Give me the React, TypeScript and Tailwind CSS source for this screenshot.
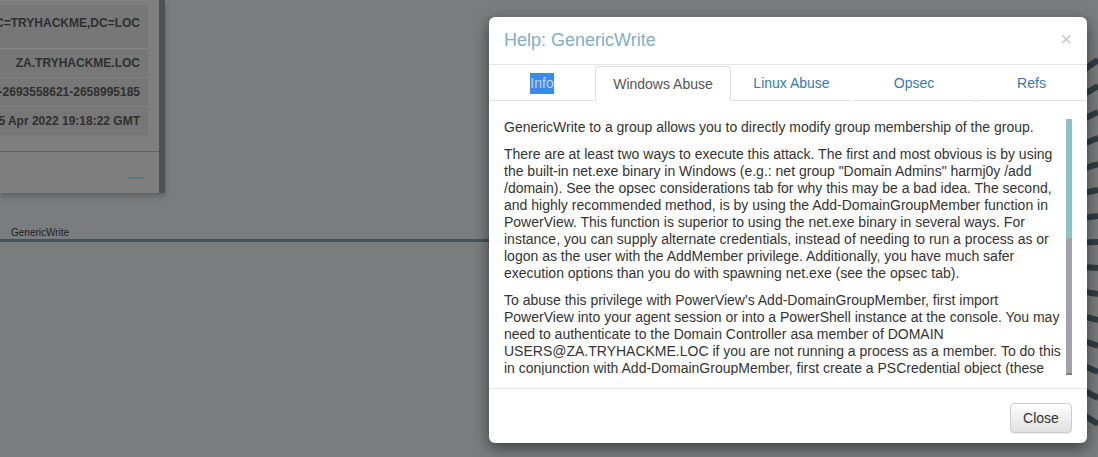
import React from "react";

const fanTargets = [60, 86, 112, 138, 164, 190, 216, 242, 268, 294, 320, 346, 372, 398, 424];

function Fan() {
  const cx = 820;
  const cy = 250;
  return (
    <svg className="absolute left-0 top-0" width={1098} height={457} viewBox="0 0 1098 457">
      {fanTargets.map((y, i) => {
        const tx = 1098;
        return <line key={i} x1={cx} y1={cy} x2={tx} y2={y} stroke="#2f3d43" strokeWidth={6} />;
      })}
    </svg>
  );
}

function LeftPanel() {
  return (
    <div className="absolute left-0 top-0 flex h-[193px] w-[165px] bg-[#7f7f7f] shadow-[0_3px_6px_rgba(0,0,0,0.25)]">
      <div className="flex w-[159px] flex-col pt-[5px]">
        <div className="w-[148px] bg-[#777777]">
          <div className="flex h-[43px] justify-end pr-[8px] pt-[10px] text-[12px] font-bold leading-[16px] text-[#2f2f2f]">
            C=TRYHACKME,DC=LOC
          </div>
          <div className="flex h-[29px] items-center justify-end border-t border-[#858585] pr-[8px] text-[12px] font-bold text-[#2f2f2f]">
            ZA.TRYHACKME.LOC
          </div>
          <div className="flex h-[29px] items-center justify-end whitespace-nowrap border-t border-[#858585] pr-[8px] text-[12px] font-bold text-[#2f2f2f]">
            -2693558621-2658995185
          </div>
          <div className="flex h-[29px] items-center justify-end whitespace-nowrap border-t border-[#858585] pr-[8px] text-[12px] font-bold text-[#2f2f2f]">
            5 Apr 2022 19:18:22 GMT
          </div>
        </div>
        <div className="mt-[16px] h-[1px] w-full bg-[#626262]" />
        <div className="flex flex-1 justify-end pr-[16px] pt-[25px]">
          <div className="h-[2px] w-[15px] bg-[#5a7580]" />
        </div>
      </div>
      <div className="w-[6px] bg-[#505050]" />
    </div>
  );
}

const tabs = [
  { label: "Info", w: "w-[106px]" },
  { label: "Windows Abuse", w: "w-[136px]" },
  { label: "Linux Abuse", w: "w-[121px]" },
  { label: "Opsec", w: "w-[124px]" },
  { label: "Refs", w: "w-[111px]" },
];

function Modal() {
  return (
    <div className="absolute left-[489px] top-[17px] flex h-[426px] w-[598px] flex-col rounded-[6px] bg-white shadow-[0_5px_15px_rgba(0,0,0,0.5)]">
      <div className="flex h-[48px] items-center justify-between border-b border-[#e5e5e5] pl-[15px] pr-[15px]">
        <span className="text-[18px] text-[#80afc5]">Help: GenericWrite</span>
        <span className="-mt-[4px] text-[20px] font-normal leading-none text-[#c8c8c8]">×</span>
      </div>
      <div className="flex h-[36px] items-end">
        {tabs.map((t, i) =>
          i === 1 ? (
            <div
              key={t.label}
              className={`${t.w} flex h-[35px] items-center justify-center rounded-t-[4px] border border-b-0 border-[#dddddd] bg-white text-[14px] text-[#555555]`}
            >
              {t.label}
            </div>
          ) : (
            <div key={t.label} className={`${t.w} flex h-[35px] px-[1px]`}>
              <div className="flex flex-1 items-center justify-center rounded-t-[4px] border-b border-[#dddddd] text-[14px] text-[#337ab7]">
                {i === 0 ? <span className="bg-[#3a8be8] text-[#bcd5f3]">{t.label}</span> : t.label}
              </div>
            </div>
          )
        )}
      </div>
      <div className="flex border-b border-[#e5e5e5] pb-[13px] pl-[15px] pr-[15px] pt-[18px]">
        <div className="h-[256px] w-[562px] overflow-hidden text-[14px] leading-[17px] text-[#333333]">
          <p className="mb-[10px]">GenericWrite to a group allows you to directly modify group membership of the group.</p>
          <p className="mb-[10px]">
            There are at least two ways to execute this attack. The first and most obvious is by using the built-in net.exe
            binary in Windows (e.g.: net group "Domain Admins" harmj0y /add /domain). See the opsec considerations tab for why
            this may be a bad idea. The second, and highly recommended method, is by using the Add-DomainGroupMember function
            in PowerView. This function is superior to using the net.exe binary in several ways. For instance, you can supply
            alternate credentials, instead of needing to run a process as or logon as the user with the AddMember privilege.
            Additionally, you have much safer execution options than you do with spawning net.exe (see the opsec tab).
          </p>
          <p className="mb-[10px]">
            To abuse this privilege with PowerView's Add-DomainGroupMember, first import PowerView into your agent session or
            into a PowerShell instance at the console. You may need to authenticate to the Domain Controller asa member of
            DOMAIN USERS@ZA.TRYHACKME.LOC if you are not running a process as a member. To do this in conjunction with
            Add-DomainGroupMember, first create a PSCredential object (these examples comes from the PowerView help
            documentation):
          </p>
        </div>
        <div className="flex h-[256px] w-[6px] flex-col">
          <div className="h-[119px] bg-[#8dc2c6]" />
          <div className="flex-1 bg-[#a2a3a8]" />
          <div className="h-[2px] bg-[#7d7e84]" />
        </div>
      </div>
      <div className="flex flex-1 justify-end pr-[15px] pt-[14px]">
        <button className="h-[30px] w-[62px] rounded-[4px] border border-[#cccccc] bg-gradient-to-b from-white to-[#e0e0e0] text-[14px] text-[#333333] shadow-[inset_0_1px_0_rgba(255,255,255,0.15),0_1px_1px_rgba(0,0,0,0.075)]">
          Close
        </button>
      </div>
    </div>
  );
}

export default function App() {
  return (
    <div
      className="relative h-[457px] w-[1098px] overflow-hidden bg-[#7b7c7d]"
      style={{ fontFamily: '"Liberation Sans", Arial, sans-serif' }}
    >
      <Fan />
      <div className="absolute left-0 top-[239px] h-[3px] w-[600px] bg-[#45545a]" />
      <div className="absolute left-[11px] top-[225px] text-[10px] text-[#1e1e1e]">GenericWrite</div>
      <LeftPanel />
      <Modal />
    </div>
  );
}
